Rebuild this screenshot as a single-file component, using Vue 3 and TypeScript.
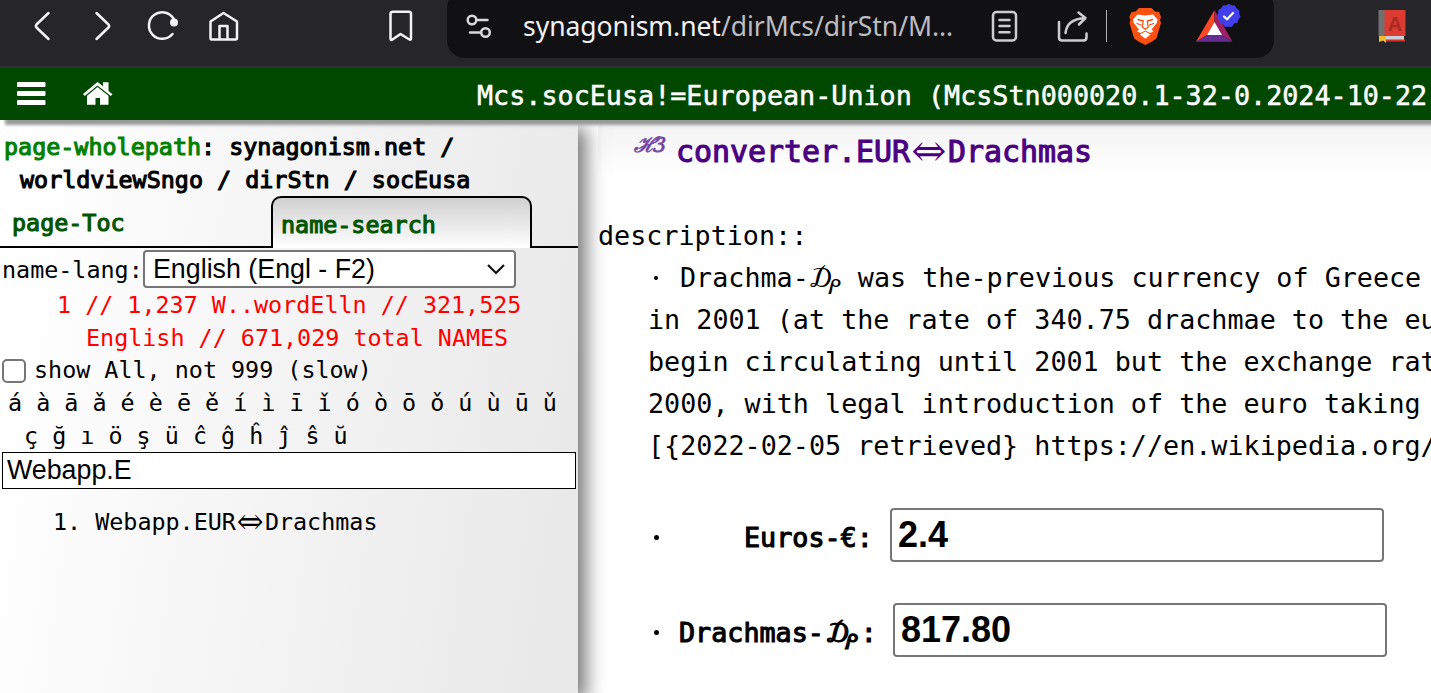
<script setup lang="ts">
import { ref } from 'vue'

const letterRows: string[] = [
  'á à ā ǎ é è ē ě í ì ī ǐ ó ò ō ǒ ú ù ū ǔ',
  'ç ğ ı ö ş ü ĉ ĝ ĥ ĵ ŝ ŭ',
]
const description: string[] = [
  'in 2001 (at the rate of 340.75 drachmae to the eu',
  'begin circulating until 2001 but the exchange rat',
  '2000, with legal introduction of the euro taking',
  '[{2022-02-05 retrieved} https://en.wikipedia.org/',
]
const query = ref('Webapp.E')
const euros = ref('2.4')
const drachmas = ref('817.80')
const showAll = ref(false)
</script>

<template>
  <div class="window">
    <header class="browser">
      <svg class="i-back" width="20" height="36" viewBox="32 8 20 36"><path d="M48.500 13L36.500 24.500Q35.200 26 36.500 27.500L48.500 39" /></svg>
      <svg class="i-next" width="20" height="36" viewBox="93 8 20 36"><path d="M96.500 13L108.500 24.500Q109.800 26 108.500 27.500L96.500 39" /></svg>
      <svg class="i-reload" width="34" height="36" viewBox="146 8 34 36">
        <path d="M172.500 34A13.300 13.300 0 1 1 173.500 18.500" /><circle cx="174" cy="22.500" r="4" class="solid" />
      </svg>
      <svg class="i-home" width="32" height="36" viewBox="208 8 32 36">
        <path d="M210.500 21.500L223.500 13L237 21.500V38Q237 39.500 235.500 39.500H211.500Q210.500 39.500 210.500 38ZM219.500 39V26H227.500V39" />
      </svg>
      <svg class="i-mark" width="26" height="36" viewBox="388 8 26 36">
        <path d="M393 11.700H409Q411 11.700 411 13.700V38.500Q411 40.500 409 39.300L400.500 34L392.500 39.500Q390.500 40.800 390.500 38.500V13.700Q390.500 11.700 393 11.700Z" />
      </svg>
      <div class="address">
        <svg class="i-site" width="28" height="30" viewBox="465 12 28 30">
          <circle cx="472" cy="20" r="4.300" /><path d="M477 20H487.500M470 32.500H481" /><circle cx="485.500" cy="32.500" r="4.300" />
        </svg>
        <div class="url"><span>synagonism.net</span>/dirMcs/dirStn/M...</div>
        <svg class="i-reader dim" width="28" height="34" viewBox="990 9 28 34">
          <rect x="993" y="12" width="23" height="28.500" rx="3.500" /><path d="M999.500 20H1009.500M999.500 26H1009.500M999.500 32.300H1009.500" />
        </svg>
        <svg class="i-share dim" width="34" height="34" viewBox="1056 9 34 34">
          <path d="M1059 22V37.500Q1059 40.500 1062 40.500H1083.500Q1086.500 40.500 1086.500 37.500V33.500M1065.500 33Q1067 19 1085 18M1078.500 12.500L1085.500 18L1079 24.500" />
        </svg>
        <i class="sep"></i>
        <svg class="i-lion" width="34" height="40" viewBox="1128 6 34 40">
          <path class="fire" d="M1139 8H1151.500L1155 11.500L1159 12L1161 17L1160 20L1161 23L1156.500 38Q1155.500 40 1145.300 45Q1135 40 1134 38L1129.500 23L1130.500 20L1129.300 17L1131.500 12L1135.500 11.500Z" />
          <path class="mane" d="M1137.500 14.500L1145.300 15.500L1153 14.500L1157.500 19.500L1156.800 23L1151.500 29.500L1153.500 31.500L1150 33L1145.300 30.500L1140.500 33L1137 31.500L1139 29.500L1133.800 23L1133 19.500Z" />
          <path class="mane" d="M1145.300 31.500L1150.500 34.500L1145.300 38.700L1140 34.500Z" />
          <path class="face" d="M1138 19.500L1143.300 21L1142.300 27L1145.300 29.300L1148.300 27L1147.300 21L1152.600 19.500M1137 23.500L1141 25M1153.600 23.500L1149.600 25" />
        </svg>
        <svg class="i-bat" width="46" height="42" viewBox="1195 2 46 42">
          <path fill="#ff4724" d="M1214.500 10L1196 41.700L1207 35L1214.500 22Z" />
          <path fill="#9e1f63" d="M1214.500 10L1232.500 41.700L1221.500 35L1214.500 22Z" />
          <path fill="#662d91" d="M1196 41.700H1232.500L1221.500 35H1207Z" />
          <path fill="#fff" d="M1214.500 22L1222 35H1207Z" />
          <path fill="#423eec" d="M1228.500 4L1231.500 5.200L1234.800 5.600L1236.600 8.400L1239.300 10.500L1239.200 13.800L1240.500 16.500L1238.500 19.200L1237.500 22.500L1234.300 23.400L1231.800 27L1228.500 26.800L1225 27L1222.700 24L1219.300 22.500L1218.700 19.200L1217 16.500L1218.200 13.500L1218.300 10L1221.200 8.300L1223 5.400L1226.300 5.200Z" />
          <path class="tick" d="M1224 16.500L1227 19.300L1233 13" />
        </svg>
      </div>
      <svg class="i-book" width="30" height="36" viewBox="1377 8 30 36">
        <path fill="#707070" d="M1378.500 10H1385V36H1378.500Z" /><path fill="#db3b30" d="M1384.500 10H1405.500V36H1384.500Z" />
        <path fill="#c8d1d8" d="M1380 36H1404V40H1380Z" /><path fill="#d63027" d="M1384 39.500H1405V41.500H1384Z" />
        <path fill="#f1bd2f" d="M1379 36H1386V43L1383 40.500L1379 42Z" />
        <text x="1395" y="31" text-anchor="middle">A</text>
      </svg>
    </header>

    <div class="titlebar">
      <svg class="i-menu" width="30" height="26" viewBox="16 81 30 26">
        <rect x="17" y="82" width="28.500" height="5" rx="1" /><rect x="17" y="91" width="28.500" height="5" rx="1" /><rect x="17" y="100" width="28.500" height="5" rx="1" />
      </svg>
      <svg class="i-site-home" width="32" height="26" viewBox="82 81 32 26">
        <path d="M83 94L97.500 82L103 86.300V82.300H108.500V91L112.500 94.200L110.800 96L97.500 85.500L84.700 96Z" />
        <path d="M97.500 87L108.500 95.700V104.800H100V98H95.500V104.800H87V95.700Z" />
      </svg>
      <h1>Mcs.socEusa!=European-Union (McsStn000020.1-32-0.2024-10-22)</h1>
    </div>

    <div class="body">
      <aside class="panel">
        <p class="path strong"><span>page-wholepath</span>: synagonism.net /<br />worldviewSngo / dirStn / socEusa</p>
        <nav class="tabs strong">
          <div class="tab">page-Toc</div>
          <div class="tab active">name-search</div>
          <div class="rest"></div>
        </nav>
        <div class="lang">
          <span>name-lang:</span>
          <div class="select">
            <span>English (Engl - F2)</span>
            <svg width="20" height="14" viewBox="0 0 20 14"><path d="M2 3L10 11L18 3" /></svg>
          </div>
        </div>
        <p class="stats">1 // 1,237 W..wordElln // 321,525<br />English // 671,029 total NAMES</p>
        <label class="all"><input v-model="showAll" type="checkbox" /><span>show All, not 999 (slow)</span></label>
        <p class="letters"><span v-for="row in letterRows" :key="row">{{ row }}</span></p>
        <input v-model="query" class="query" type="text" />
        <div class="result"><span>1.</span><span>Webapp.EUR<b class="arrow">⇔</b>Drachmas</span></div>
      </aside>

      <main class="content">
        <h3><small>ℋ3</small><span class="strong">converter.EUR<b class="arrow">⇔</b>Drachmas</span></h3>
        <p class="label">description::</p>
        <div class="text">
          <p class="first"><i class="dot"></i>Drachma-<b class="dr">₯</b> was the-previous currency of Greece</p>
          <p v-for="line in description" :key="line">{{ line }}</p>
        </div>
        <div class="field euros">
          <i class="dot"></i><span class="strong">Euros-€:</span><input v-model="euros" type="text" />
        </div>
        <div class="field drachmas">
          <i class="dot"></i><span class="strong">Drachmas-<b class="dr">₯</b>:</span><input v-model="drachmas" type="text" />
        </div>
      </main>
    </div>
  </div>
</template>

<style>
body { margin: 0; overflow: hidden; }
</style>

<style scoped>
* { box-sizing: border-box; }
p, h1, h3 { margin: 0; font-weight: normal; }
svg { display: block; flex: none; }
.window {
  width: 1431px; height: 693px; overflow: hidden; background: #fff; color: #000;
  display: flex; flex-direction: column;
  font-family: "DejaVu Sans Mono", monospace; white-space: pre;
}
.strong { -webkit-text-stroke: 1.1px currentColor; }

.browser {
  height: 68px; flex: none; display: flex; align-items: flex-start;
  background: #26252a; border-bottom: 2px solid #323136;
}
.browser svg { margin-top: 8px; fill: none; stroke: #f3f3f5; stroke-width: 2.5; stroke-linecap: round; stroke-linejoin: round; }
.browser .solid { fill: #f3f3f5; stroke: none; }
.browser .i-back { margin-left: 32px; }
.browser .i-next { margin-left: 41px; }
.browser .i-reload { margin-left: 33px; }
.browser .i-home { margin-left: 28px; }
.browser .i-mark { margin-left: 148px; }
.address {
  width: 827px; height: 68px; margin: -10px 0 0 33px; padding-top: 10px; border-radius: 18px;
  background: #111113; display: flex; align-items: flex-start; flex: none;
}
.address .i-site { margin: 12px 0 0 18px; stroke: #d8d8da; }
.url {
  width: 440px; margin-left: 30px; height: 54px; color: #bdbdc1;
  font: 26.5px/53px "Noto Sans", sans-serif; letter-spacing: -0.04px;
}
.url span { color: #f1f1f3; }
.browser .dim { stroke: #cdcdd0; }
.address .i-reader { margin: 9px 0 0 27px; }
.address .i-share { margin: 9px 0 0 38px; }
.sep { width: 1px; height: 32px; margin: 10px 0 0 16px; background: #aeaeb2; }
.address .i-lion { margin: 6px 0 0 21px; stroke: none; }
.fire { fill: #fb5010; }
.mane { fill: #fff; }
.browser .face { stroke: #fb5010; stroke-width: 1.3; }
.address .i-bat { margin: 2px 0 0 33px; stroke: none; }
.tick { stroke: #fff; stroke-width: 2.2; }
.browser .i-book { margin-left: 103px; stroke: none; }
.i-book text { fill: #a92a25; font: bold 20px "Liberation Sans", sans-serif; }

.titlebar {
  height: 52px; flex: none; background: #004800; display: flex; align-items: flex-start;
  box-shadow: 5px 5px 3px #999; position: relative; z-index: 2;
}
.titlebar svg { fill: #fff; margin-top: 13px; }
.i-menu { margin-left: 16px; }
.i-site-home { margin-left: 36px; }
.titlebar h1 { margin-left: 363px; color: #fff; font-size: 26.76px; line-height: 56px; -webkit-text-stroke: 0.5px #fff; }

.body { flex: 1; display: flex; min-height: 0; }
.panel {
  width: 578px; flex: none; padding-top: 11px; font-size: 23.39px; line-height: 33px; position: relative; z-index: 1;
  background: linear-gradient(98deg, #fff 5%, #e8e8e8 98%); box-shadow: 8px 8px 18px #777;
}
.path { padding-left: 20px; text-indent: -16px; }
.path span { color: #008000; }
.tabs { display: flex; height: 52px; margin-top: -1px; color: #005500; }
.tab { width: 271px; padding-left: 12px; line-height: 54px; border-bottom: 2px solid #000; }
.tab.active {
  width: 261px; padding-left: 8px; line-height: 54px; border: 2px solid #000; border-bottom: 0;
  border-radius: 10px 10px 0 0; background: linear-gradient(#d0d0d0, #fff);
}
.rest { flex: 1; border-bottom: 2px solid #000; }
.lang { display: flex; padding: 2px 0 0 2px; height: 40px; line-height: 40px; }
.lang > span { width: 141px; }
.select {
  width: 373px; height: 38px; border: 2px solid #767676; border-radius: 4px; background: #fff;
  display: flex; align-items: center; justify-content: space-between; padding: 0 8px;
  font: 26.8px/34px "Liberation Sans", Arial, sans-serif;
}
.select svg { fill: none; stroke: #111; stroke-width: 2.2; }
.stats { color: #f00; padding: 1px 0 0 86px; text-indent: -29px; }
.all { display: flex; align-items: center; height: 33px; padding-left: 2px; margin-top: -1px; }
.all input {
  appearance: none; width: 24px; height: 24px; margin: 0 8px 0 0; background: #fff;
  border: 2px solid #767676; border-radius: 5px;
}
.letters { padding-left: 8px; }
.letters span { display: block; }
.letters span + span { padding-left: 16px; }
.query {
  display: block; width: 574px; height: 37px; margin: -1px 0 0 2px; padding: 0 4px 1px; border: 1px solid #000; outline: 0;
  background: #fff; color: #000; font: 26.8px "Liberation Sans", Arial, sans-serif;
}
.result { display: flex; gap: 14px; padding: 17px 0 0 53px; }
.arrow { display: inline-flex; justify-content: center; width: 29px; font: 29px/20px "DejaVu Math TeX Gyre", "DejaVu Serif", serif; }

.content { flex: 1; min-width: 0; padding-left: 20px; overflow: hidden; font-size: 26.74px; line-height: 42px; }
h3 {
  height: 62px; padding-left: 36px; display: flex; align-items: flex-start; color: #4b0082;
  font-size: 29.9px; line-height: 64px; background: linear-gradient(#f2f2f2, #fff 56px);
}
h3 small {
  width: 42px; font: italic 21px/50px "DejaVu Serif", serif; letter-spacing: -3px; color: #6b3a9c;
  -webkit-text-stroke: 0.8px #7b50a6;
}
h3 .arrow { width: 38px; font-size: 38px; -webkit-text-stroke: 0; }
.label { margin-top: 33px; }
.text { padding-left: 50px; }
.text p { height: 42px; }
.dot { width: 5px; height: 5px; border-radius: 50%; background: #000; display: inline-block; flex: none; }
.first .dot { width: 4px; height: 4px; margin: 0 22px 7px 6px; vertical-align: baseline; }
.dr { display: inline-block; width: 33px; text-align: center; font: 31px/20px "Liberation Serif", "DejaVu Serif", serif; }
.field { display: flex; align-items: center; height: 54px; padding-left: 56px; }
.field .dot { margin-top: 5px; }
.field input {
  width: 494px; height: 54px; border: 2px solid #767676; border-radius: 4px; outline: 0; padding: 0 6px; background: #fff; color: #000;
  font: bold 36px "Liberation Sans", Arial, sans-serif;
}
.field span { line-height: 60px; margin-top: 5px; }
.euros { margin-top: 41px; }
.euros span { margin-left: 85px; width: 146px; }
.euros input { margin-left: -1px; }
.drachmas { margin-top: 41px; }
.drachmas span { margin-left: 20px; width: 214px; }
.drachmas input { margin-left: -1px; }
.drachmas .dr { width: 37px; }
.field input { position: relative; left: 1px; }
</style>
